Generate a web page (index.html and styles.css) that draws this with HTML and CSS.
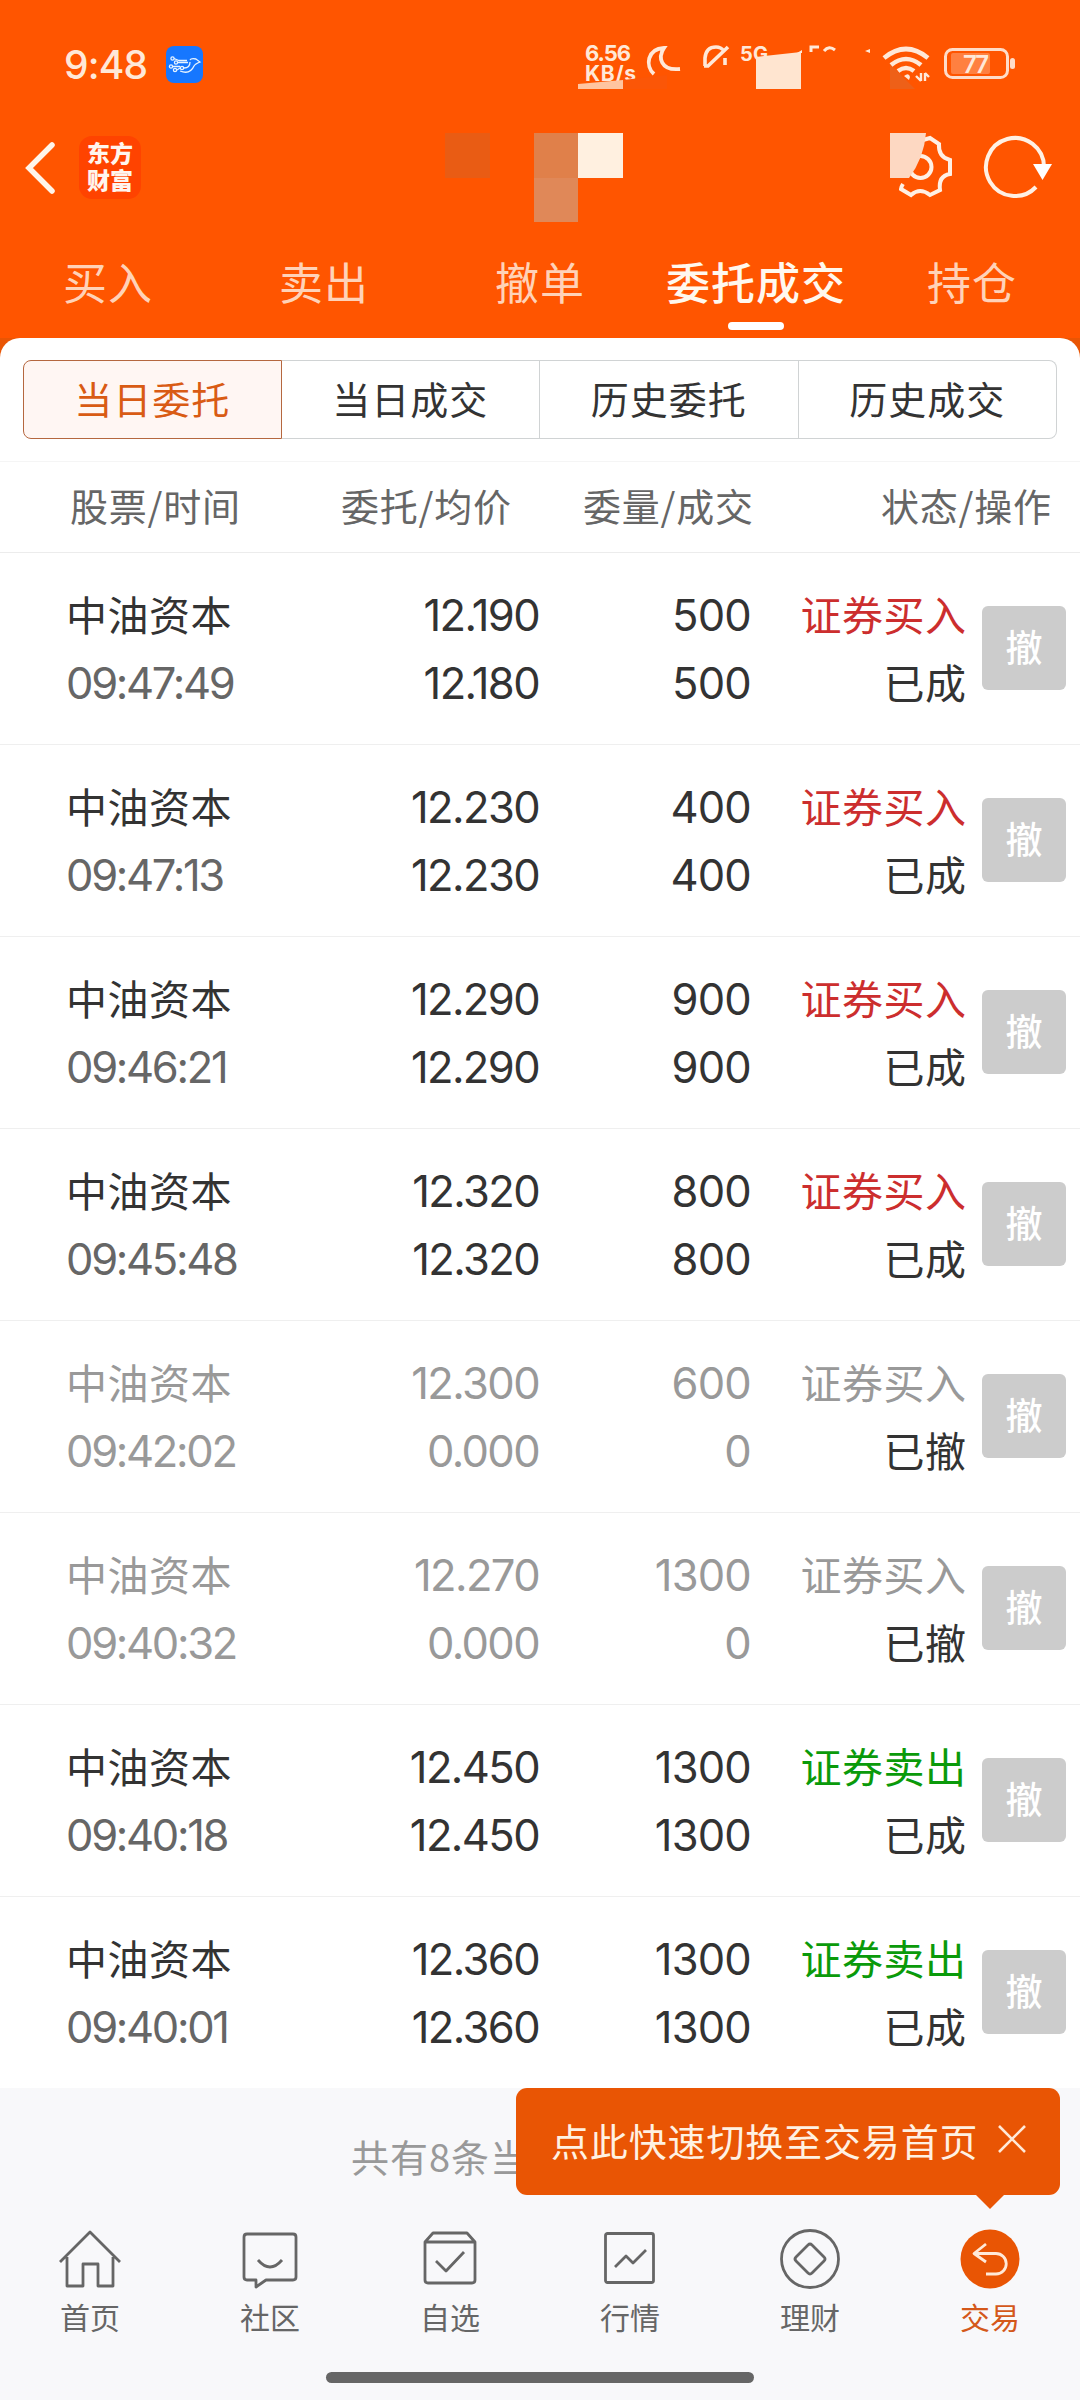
FILE: index.html
```html
<!DOCTYPE html>
<html lang="zh-CN">
<head>
<meta charset="utf-8">
<title>委托成交</title>
<link rel="stylesheet" href="styles.css">
</head>
<body>
<div class="app">
  <header class="top">
    <div class="status">
      <span class="clock">9:48</span>
      <svg class="app-badge" viewBox="0 0 37 37" width="37" height="37"><rect width="37" height="37" rx="8" fill="#1677ff"/><g fill="none" stroke="#e8f4ff" stroke-width="1.3"><circle cx="6.500" cy="12.500" r="1.6"/><circle cx="10" cy="16.500" r="1.6"/><circle cx="5" cy="20.500" r="1.6"/><circle cx="9" cy="24" r="1.6"/><circle cx="16" cy="22" r="1.6"/><path d="M8 12.500l5 2h8M12 16.500h10M7 20.500h7M11 24l3-2M18 22q6 0 6-6M14 25q10 4 14-5q1-2 6-4l-4-3q-5-1-6 1"/></g></svg>
      <svg class="signals" viewBox="570 30 460 70" width="460" height="70">
        <g fill="#ffe8d8" font-family="Inter, sans-serif" font-weight="700">
          <text x="585" y="61" font-size="22" textLength="46">6.56</text>
          <text x="585" y="81" font-size="21" textLength="51">KB/s</text>
          <text x="740" y="61" font-size="20" textLength="28">5G</text>
        </g>
        <path d="M578 84L623 80V89H578z" fill="#ffc4a0"/>
        <path d="M623 80L667 75V89H623z" fill="#fb5607"/>
        <path d="M654 74C645 66 647 49 664 48C658 57 660 71 680 69" fill="none" stroke="#ffe8d8" stroke-width="3.800"/>
        <path d="M705 66V58Q706 47 716 47Q721 47 724 51M704 66H708L728 47M725 58V65" fill="none" stroke="#ffe8d8" stroke-width="3.600"/>
        <path d="M756 57L801 52V89H756z" fill="#ffe5d0"/>
        <path d="M797 53l5-3v3zM865 51l5-2v4z" fill="#ffe8d8"/>
        <path d="M811 52V47H819M824 51Q829 45 835 50" fill="none" stroke="#ffe8d8" stroke-width="3"/>
        <path d="M890 64L915 89H890z" fill="#ee6018"/>
        <path d="M884 58Q906 40 928 58M891 65Q906 53 921 65M898 71Q906 65 914 71" fill="none" stroke="#ffe8d8" stroke-width="4.600"/>
        <path d="M904 76q5-4 6 1l-1 3z" fill="#ffe8d8"/>
        <path d="M921 81V73M921 81l-5-5M925 73v8M925 73l4 4" fill="none" stroke="#ffe8d8" stroke-width="2.400"/>
        <rect x="945.500" y="49.500" width="62" height="28" rx="7" fill="none" stroke="#ffdcc8" stroke-width="3"/>
        <rect x="951" y="53" width="39" height="21" rx="2" fill="#ff8040"/>
        <rect x="1010" y="58" width="5" height="11" rx="2.500" fill="#ffdcc8"/>
        <text x="963" y="73" font-family="Inter, sans-serif" font-weight="600" font-size="24" textLength="26" fill="#ffe8d8">77</text>
      </svg>
    </div>
    <div class="titlebar">
      <svg viewBox="0 0 30 52" width="30" height="52"><path d="M27 3L4 26L27 49" fill="none" stroke="#fff5ea" stroke-width="5.500" stroke-linecap="round"/></svg>
      <div class="logo"><span>东方</span><span>财富</span></div>
      <svg class="mosaic" viewBox="445 133 178 90" width="178" height="90"><path d="M445 133h45v45h-45z" fill="#e95c14"/><path d="M534 133h44v45h-44z" fill="#e0804a"/><path d="M578 133h45v45h-45z" fill="#fff0e0"/><path d="M534 178h44v44h-44z" fill="#e08858"/></svg>
      <svg class="tools" viewBox="885 130 175 80" width="175" height="80">
        <g fill="none" stroke="#fff0e4" stroke-width="4">
          <path d="M923 140L930 138L939 144Q938 157 950 160V174Q938 176 940 190L930 195Q920 187 911 195L901 189Q901 187 903 184"/><circle cx="920.500" cy="167" r="11"/>
          <path d="M1044 167A29 29 0 1 0 1036 187"/>
        </g>
        <path d="M890 133h36q-2 25-17 45h-19z" fill="#fdd8c2"/>
        <path d="M1033 164h19l-9.500 16z" fill="#fff"/>
      </svg>
    </div>
    <nav class="tabs"><a>买入</a><a>卖出</a><a>撤单</a><a class="on">委托成交</a><a>持仓</a></nav>
  </header>
  <main class="panel">
    <div class="segments"><a class="on">当日委托</a><a>当日成交</a><a>历史委托</a><a>历史成交</a></div>
    <div class="grid head"><span>股票/时间</span><span>委托/均价</span><span>委量/成交</span><span>状态/操作</span></div>
    <div class="grid row"><div class="name"><b>中油资本</b><i>09:47:49</i></div><div class="num price"><b>12.190</b><i>12.180</i></div><div class="num"><b>500</b><i>500</i></div><div class="state"><b class="buy">证券买入</b><i>已成</i></div><button>撤</button></div>
    <div class="grid row"><div class="name"><b>中油资本</b><i>09:47:13</i></div><div class="num price"><b>12.230</b><i>12.230</i></div><div class="num"><b>400</b><i>400</i></div><div class="state"><b class="buy">证券买入</b><i>已成</i></div><button>撤</button></div>
    <div class="grid row"><div class="name"><b>中油资本</b><i>09:46:21</i></div><div class="num price"><b>12.290</b><i>12.290</i></div><div class="num"><b>900</b><i>900</i></div><div class="state"><b class="buy">证券买入</b><i>已成</i></div><button>撤</button></div>
    <div class="grid row"><div class="name"><b>中油资本</b><i>09:45:48</i></div><div class="num price"><b>12.320</b><i>12.320</i></div><div class="num"><b>800</b><i>800</i></div><div class="state"><b class="buy">证券买入</b><i>已成</i></div><button>撤</button></div>
    <div class="grid row void"><div class="name"><b>中油资本</b><i>09:42:02</i></div><div class="num price"><b>12.300</b><i>0.000</i></div><div class="num"><b>600</b><i>0</i></div><div class="state"><b>证券买入</b><i>已撤</i></div><button>撤</button></div>
    <div class="grid row void"><div class="name"><b>中油资本</b><i>09:40:32</i></div><div class="num price"><b>12.270</b><i>0.000</i></div><div class="num"><b>1300</b><i>0</i></div><div class="state"><b>证券买入</b><i>已撤</i></div><button>撤</button></div>
    <div class="grid row"><div class="name"><b>中油资本</b><i>09:40:18</i></div><div class="num price"><b>12.450</b><i>12.450</i></div><div class="num"><b>1300</b><i>1300</i></div><div class="state"><b class="sell">证券卖出</b><i>已成</i></div><button>撤</button></div>
    <div class="grid row"><div class="name"><b>中油资本</b><i>09:40:01</i></div><div class="num price"><b>12.360</b><i>12.360</i></div><div class="num"><b>1300</b><i>1300</i></div><div class="state"><b class="sell">证券卖出</b><i>已成</i></div><button>撤</button></div>
  </main>
  <footer class="bottom">
    <p class="total">共有8条当日委托记录</p>
    <div class="tip"><span>点此快速切换至交易首页</span><svg viewBox="0 0 30 30" width="30" height="30"><path d="M2 2L28 28M28 2L2 28" stroke="#ffe9d8" stroke-width="2.600"/></svg></div>
    <nav class="nav">
      <a><svg viewBox="0 0 64 64"><path d="M2 36L32 6L62 36M9 31V60H25V38H40V60H55V31"/></svg>首页</a>
      <a><svg viewBox="0 0 64 64"><path d="M9 8H55q3 0 3 3V51q0 3-3 3H28L18 61V54H9q-3 0-3-3V11q0-3 3-3zM20 34Q32 48 44 34"/></svg>社区</a>
      <a><svg viewBox="0 0 64 64"><path d="M7 16L15 7H49L57 16V54q0 3-3 3H10q-3 0-3-3zM7 16H57M18 35L28 45L46 26"/></svg>自选</a>
      <a><svg viewBox="0 0 64 64"><rect x="7.500" y="7.500" width="48" height="49" rx="2"/><path d="M17 41L28 30L35 37L48 24"/></svg>行情</a>
      <a><svg viewBox="0 0 64 64"><circle cx="32" cy="33" r="28.500"/><path d="M30 19L18 31q-2 2 0 4L30 47q2 2 4 0L46 35q2-2 0-4L34 19q-2-2-4 0z"/></svg>理财</a>
      <a class="on"><svg viewBox="0 0 64 64"><circle class="disc" cx="32" cy="33" r="29.500"/><path d="M28 18L16 27.500L28 36M16 27.500H38a10 10 0 0 1 0 20.500H28"/></svg>交易</a>
    </nav>
    <div class="handle"></div>
  </footer>
</div>
</body>
</html>
```

FILE: styles.css
```css
* { box-sizing: border-box; }
body { margin: 0; font-family: "Noto Sans CJK SC", sans-serif; color: #333; background: #fff; }
.app { width: 1080px; height: 2400px; overflow: hidden; display: flex; flex-direction: column; }
b, i { font-weight: 400; font-style: normal; }
svg { display: block; flex: none; }

.top { height: 338px; background: #f50; display: flex; flex-direction: column; flex: none; }
.status { height: 130px; padding: 30px 50px 30px 64px; display: flex; align-items: center; }
.clock { font: 500 39px/66px Inter, sans-serif; letter-spacing: -0.800px; color: #ffe8d8; width: 102px; white-space: nowrap; }
.app-badge { margin-top: -2px; }
.signals { margin-left: auto; }
.titlebar { height: 96px; display: flex; align-items: flex-start; padding-left: 25px; }
.titlebar > svg:first-child { margin-top: 12px; }
.logo { width: 62px; height: 63px; margin: 6px 0 0 24px; border-radius: 13px; background: #ff4300; display: flex; flex-direction: column; align-items: center; padding-top: 3px; font-weight: 900; font-size: 23px; line-height: 27px; color: #fff5ee; }
.mosaic { margin: 3px 0 0 304px; }
.tools { margin-left: 262px; }
.tabs { display: grid; grid-template-columns: repeat(5, 1fr); text-align: center; font-size: 44px; line-height: 64px; letter-spacing: 1px; color: #ffd2b8; padding-top: 23px; }
.tabs .on { color: #fff8ee; font-weight: 500; }
.tabs .on::after { content: ""; display: block; width: 56px; height: 8px; border-radius: 4px; background: #fff; margin: 9px auto 0; }

.panel { height: 1750px; flex: none; background: linear-gradient(#e95504 0 20px, #fff 20px); }
.segments { height: 124px; padding: 22px 23px; display: grid; grid-template-columns: repeat(4, 1fr); background: #fff; border-radius: 20px 20px 0 0; border-bottom: 1px solid #f5f5f5; }
.segments a { display: flex; align-items: center; justify-content: center; font-size: 38px; letter-spacing: 1px; border: 1px solid #d0d3d4; border-left-width: 0; padding-bottom: 5px; }
.segments a:last-child { border-radius: 0 8px 8px 0; }
.segments .on { color: #d95b14; background: #fff6f3; border: 1px solid #b5673f; border-radius: 8px 0 0 8px; }
.grid { display: grid; }
.head { height: 91px; grid-template-columns: 271px 242px 298px 170px; padding-left: 70px; border-bottom: 1px solid #ececec; font-size: 38px; line-height: 86px; letter-spacing: .800px; color: #666; white-space: nowrap; }
.row { height: 192px; grid-template-columns: 200px 273px 212px 215.500px 15.500px 84px; padding-left: 66px; border-bottom: 1px solid #efefef; }
.row:last-child { border: 0; }
.row > div { padding-top: 26px; display: flex; flex-direction: column; font-size: 41px; line-height: 68px; white-space: nowrap; }
.name b, .state { letter-spacing: .500px; }
.row > .name i, .row > .num { font-family: Inter, sans-serif; font-size: 43.500px; }
.row > .name i { position: relative; top: 1.500px; letter-spacing: -2.300px; }
.row > .num { padding-top: 28px; text-align: right; letter-spacing: -.800px; }
.row > .price { letter-spacing: -1.600px; }
.row > .state { text-align: right; }
.name i { color: #666; }
.buy { color: #cc2e2e; }
.sell { color: #0a9a0a; }
.void .name, .void .num, .void i, .void b { color: #999; }
.void .name i { color: #999; }
.void .state i { color: #333; }
.row button { grid-column: 6; width: 84px; height: 84px; margin-top: 53px; padding: 0 0 5px; border: 0; border-radius: 6px; background: #ccc; color: #fff; font: 500 37px "Noto Sans CJK SC", sans-serif; }

.bottom { position: relative; flex: 1; background: #f8f8fa; display: flex; flex-direction: column; }
.total { margin: 0; padding: 40px 0 0 351px; height: 138px; font-size: 38px; line-height: 56px; letter-spacing: 1px; color: #999; }
.tip { position: absolute; left: 516px; top: 0; width: 544px; height: 107px; border-radius: 11px; background: #e95504; display: flex; align-items: center; padding: 0 33px 5px 35px; justify-content: space-between; font-size: 38px; letter-spacing: .850px; color: #fff1e2; white-space: nowrap; }
.tip::after { content: ""; position: absolute; left: 460px; top: 107px; border: 14px solid transparent; border-top-color: #e95504; border-bottom: 0; }
.nav { display: grid; grid-template-columns: repeat(6, 1fr); font-size: 30px; line-height: 44px; color: #666; }
.nav a { display: flex; flex-direction: column; align-items: center; gap: 4px; }
.nav svg { width: 64px; height: 64px; fill: none; stroke: #666; stroke-width: 2.800; stroke-linejoin: round; }
.nav .on { color: #d4581a; }
.nav .on svg { stroke: #ffe9d8; }
.nav .disc { fill: #e95504; stroke: none; }
.handle { width: 428px; height: 11px; border-radius: 6px; background: #666; margin: 34px auto 0; }
```
